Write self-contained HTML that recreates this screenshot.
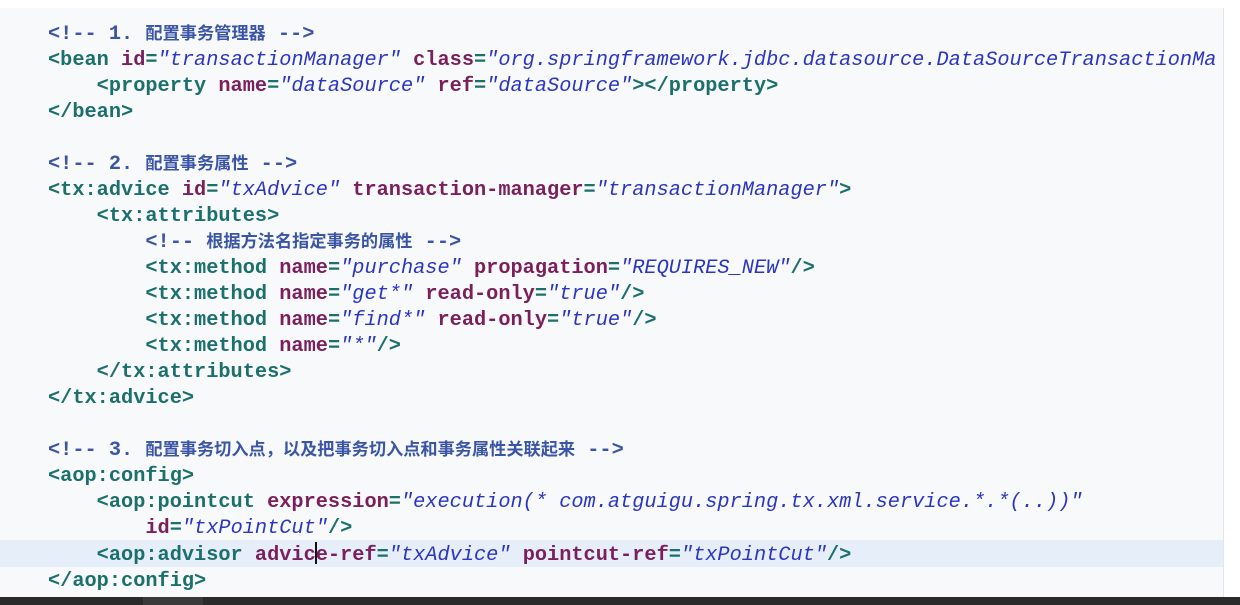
<!DOCTYPE html>
<html><head><meta charset="utf-8"><style>
html,body{margin:0;padding:0;background:#fff;width:1240px;height:605px;overflow:hidden}
.ed{position:absolute;left:0;top:8px;width:1223px;height:589px;background:#f8f9fa;border-right:1px solid #e6e6e6}
.hl{position:absolute;left:0;top:540px;width:1223px;height:27px;background:#e6eefa}
.bar{position:absolute;left:0;top:597px;width:1240px;height:8px;background:#2a2a2a}
.bar i{position:absolute;left:143px;top:0;width:60px;height:8px;background:#3a3a3a}
pre{position:absolute;left:48px;top:22px;margin:0;font-family:"Liberation Mono","Noto Sans CJK SC",monospace;font-size:20.3px;line-height:26px;font-weight:bold;color:#1b6f6c;white-space:pre}
.t{color:#1b6f6c}.a{color:#7a1f5c}.v{color:#2b35c0;font-style:italic;font-weight:normal}
.c{color:#3a55a5}.z{font-size:17.2px;line-height:0;font-weight:bold;font-family:"Noto Sans CJK SC",sans-serif}
.cur{display:inline-block;width:0;border-left:2px solid #111;height:22px;vertical-align:-4px;margin:0 -1px}
</style></head><body>
<div class="ed"></div><div class="hl"></div>
<pre><span class="c">&lt;!-- 1. <span class="z">配置事务管理器</span> --&gt;</span>
&lt;bean <span class="a">id</span>=<span class="v">"transactionManager"</span> <span class="a">class</span>=<span class="v">"org.springframework.jdbc.datasource.DataSourceTransactionMa</span>
    &lt;property <span class="a">name</span>=<span class="v">"dataSource"</span> <span class="a">ref</span>=<span class="v">"dataSource"</span>&gt;&lt;/property&gt;
&lt;/bean&gt;

<span class="c">&lt;!-- 2. <span class="z">配置事务属性</span> --&gt;</span>
&lt;tx:advice <span class="a">id</span>=<span class="v">"txAdvice"</span> <span class="a">transaction-manager</span>=<span class="v">"transactionManager"</span>&gt;
    &lt;tx:attributes&gt;
        <span class="c">&lt;!-- <span class="z">根据方法名指定事务的属性</span> --&gt;</span>
        &lt;tx:method <span class="a">name</span>=<span class="v">"purchase"</span> <span class="a">propagation</span>=<span class="v">"REQUIRES_NEW"</span>/&gt;
        &lt;tx:method <span class="a">name</span>=<span class="v">"get*"</span> <span class="a">read-only</span>=<span class="v">"true"</span>/&gt;
        &lt;tx:method <span class="a">name</span>=<span class="v">"find*"</span> <span class="a">read-only</span>=<span class="v">"true"</span>/&gt;
        &lt;tx:method <span class="a">name</span>=<span class="v">"*"</span>/&gt;
    &lt;/tx:attributes&gt;
&lt;/tx:advice&gt;

<span class="c">&lt;!-- 3. <span class="z">配置事务切入点，以及把事务切入点和事务属性关联起来</span> --&gt;</span>
&lt;aop:config&gt;
    &lt;aop:pointcut <span class="a">expression</span>=<span class="v">"execution(* com.atguigu.spring.tx.xml.service.*.*(..))"</span>
        <span class="a">id</span>=<span class="v">"txPointCut"</span>/&gt;
    &lt;aop:advisor <span class="a">advic<span class="cur"></span>e-ref</span>=<span class="v">"txAdvice"</span> <span class="a">pointcut-ref</span>=<span class="v">"txPointCut"</span>/&gt;
&lt;/aop:config&gt;</pre>
<div class="bar"><i></i></div>
</body></html>
